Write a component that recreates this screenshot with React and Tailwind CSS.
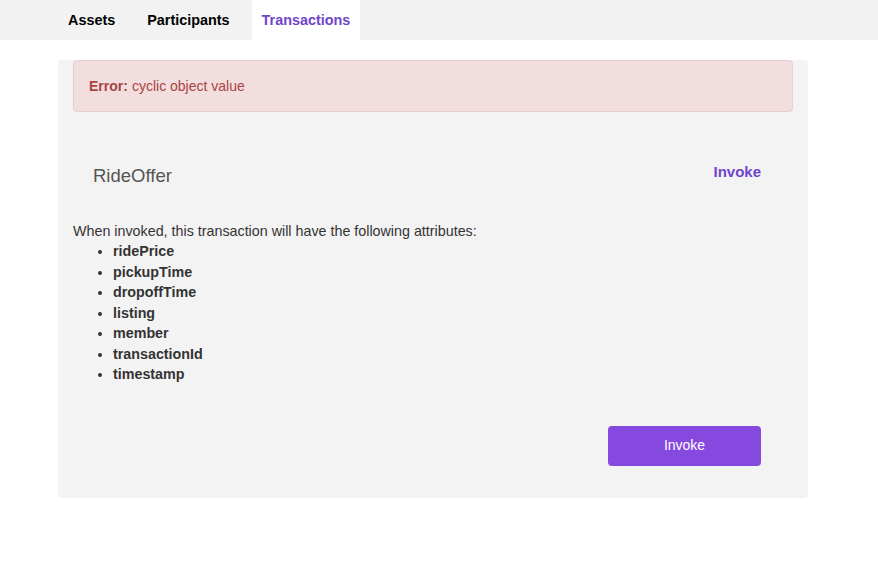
const attributes = ['ridePrice', 'pickupTime', 'dropoffTime', 'listing', 'member', 'transactionId', 'timestamp'];

const tabs = ['Assets', 'Participants', 'Transactions'];

export default function App() {
  const active = 'Transactions';
  return (
    <div className="min-h-[581px] bg-white text-[#333] font-['Liberation_Sans',Arial,sans-serif]">
      {/* Nav */}
      <div className="h-10 bg-[#f2f2f2]">
        <div className="ml-[58px] w-[750px] flex gap-3 h-full">
          {tabs.map((t) => (
            <div
              key={t}
              className={`px-[10px] pt-[2px] h-full flex items-center text-[14.4px] font-bold ${
                t === active ? 'bg-white text-[#6f45cc]' : 'text-black'
              }`}
            >
              {t}
            </div>
          ))}
        </div>
      </div>

      {/* Card */}
      <div className="ml-[58px] mt-5 w-[750px] bg-[#f3f3f3] rounded px-[15px] pb-8">
        <div className="h-[52px] bg-[#f2dede] border border-[#ebccd1] rounded flex items-center px-[15px] text-[14px] text-[#a94442]">
          <span className="font-bold mr-1">Error:</span>
          cyclic object value
        </div>

        <div className="flex items-start justify-between mt-[50px] pl-5 pr-8">
          <h2 className="text-[18.5px] leading-[28px] text-[#555]">RideOffer</h2>
          <button className="text-[15px] font-bold text-[#6f45cc] leading-[18px] mt-[1px]">Invoke</button>
        </div>

        <p className="mt-[31px] text-[14.3px] leading-5">When invoked, this transaction will have the following attributes:</p>
        <ul className="list-disc pl-10 text-[14.3px] leading-[20.5px] font-bold">
          {attributes.map((a) => (
            <li key={a}>{a}</li>
          ))}
        </ul>

        <div className="flex justify-end pr-8 mt-[41px]">
          <button className="w-[153px] h-10 rounded bg-[#8549e0] text-white text-[14px]">Invoke</button>
        </div>
      </div>
    </div>
  );
}
